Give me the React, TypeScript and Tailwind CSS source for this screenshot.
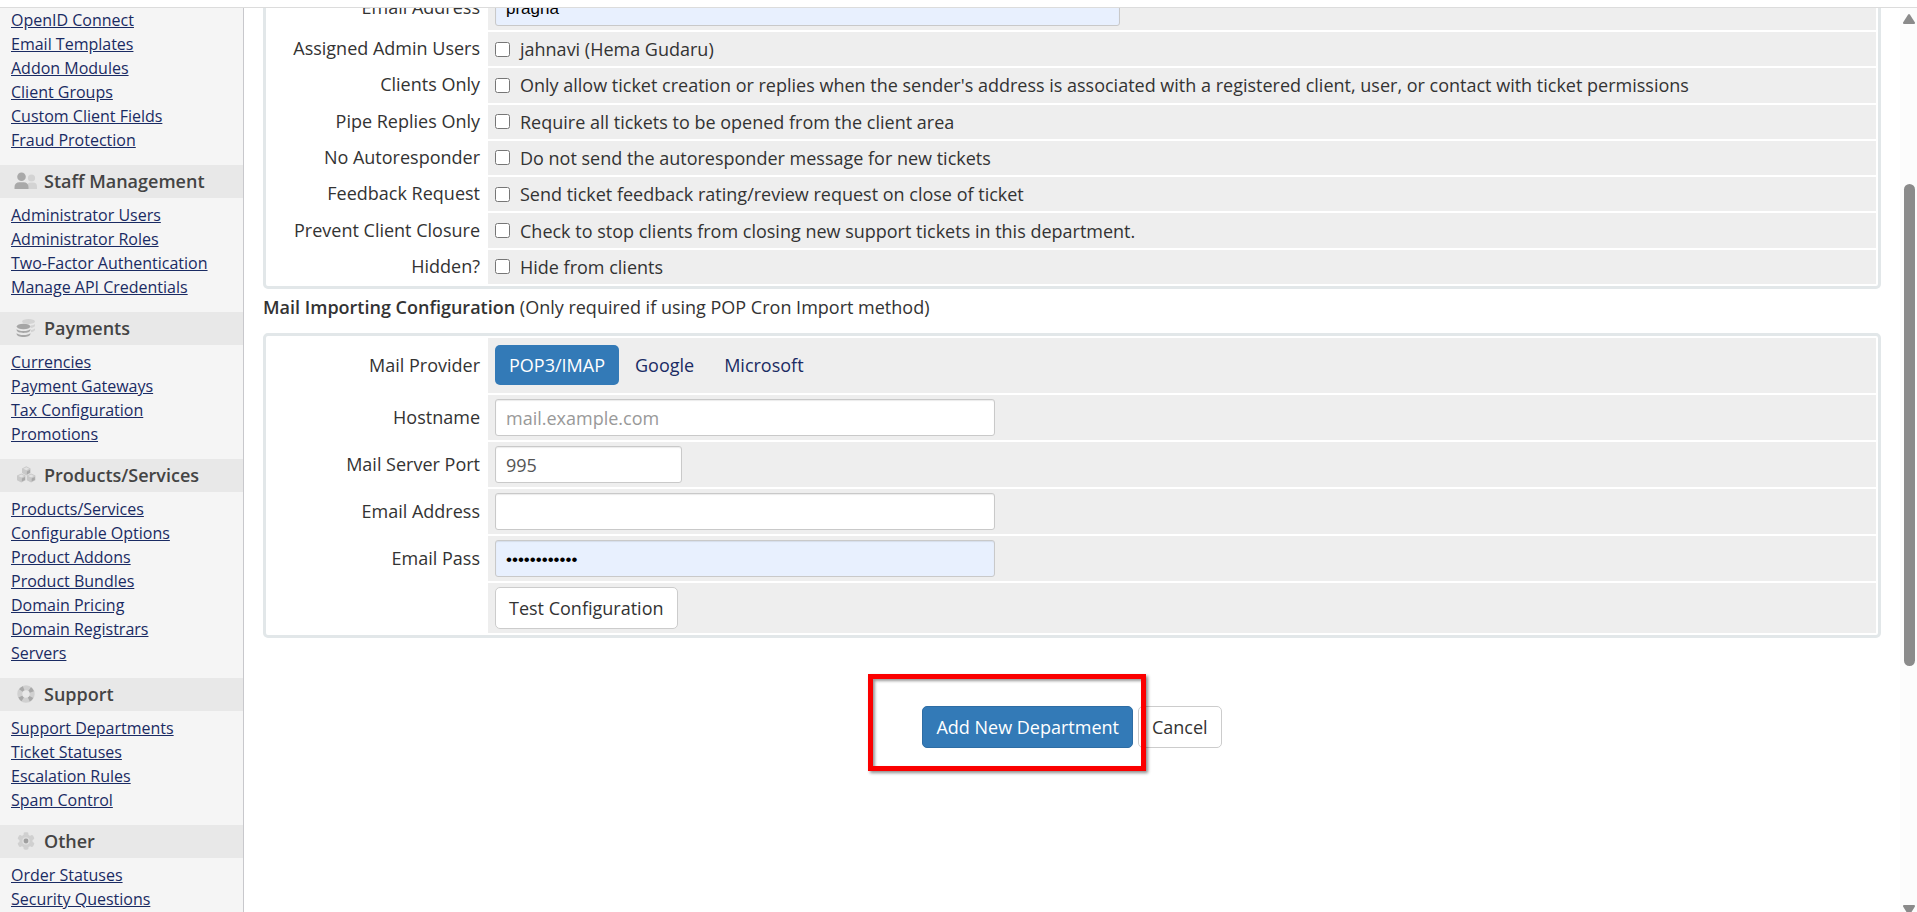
import type { ReactNode } from "react";

type Section = { title?: string; icon?: ReactNode; links: string[] };

const StaffIcon = () => (
  <svg viewBox="0 0 24 18" className="h-[18px] w-6">
    <g fill="#d3d3d3">
      <circle cx="17.500" cy="6" r="3.600" />
      <path d="M13 17v-2.500a4 4 0 0 1 4-4h2a4 4 0 0 1 4 4V17z" />
    </g>
    <g fill="#a9a9a9">
      <circle cx="7.500" cy="4.800" r="4.300" />
      <path d="M.5 17v-2a4.800 4.800 0 0 1 4.800-4.800h4.400A4.800 4.800 0 0 1 14.500 15v2z" />
    </g>
  </svg>
);

const CoinsIcon = () => (
  <svg viewBox="0 0 24 20" className="h-5 w-6">
    <g fill="#d3d3d3">
      <ellipse cx="14.500" cy="3.500" rx="6.500" ry="2.600" />
      <path d="M16.500 7.500c2.500-.2 4-.9 4.500-1.800v1.800c0 1.300-1.700 2.200-4.500 2.500zM17 12c2.200-.3 3.600-1 4-1.700v1.500c0 1.200-1.500 2-4 2.400z" />
    </g>
    <g fill="#a6a6a6">
      <ellipse cx="9.500" cy="8.500" rx="6.800" ry="2.800" />
      <path d="M2.700 11c1 1.400 3.600 2 6.800 2s5.800-.6 6.800-2v1.300c0 1.600-3 2.600-6.800 2.600s-6.800-1-6.800-2.600zM2.700 15c1 1.400 3.600 2 6.800 2s5.800-.6 6.800-2v1.300c0 1.600-3 2.700-6.800 2.700s-6.800-1.100-6.800-2.700z" />
    </g>
  </svg>
);

const Cube = ({ x, y }: { x: number; y: number }) => (
  <g transform={`translate(${x} ${y})`}>
    <path d="M0 2.200 4.300 0l4.300 2.200v4.700L4.300 9.200 0 6.900z" fill="#c9c9c9" />
    <path d="M1.300 2.600 4.300 1l3 1.600-3 1.500z" fill="#e2e2e2" />
    <path d="M4.900 5.200l3.100-1.600v3L4.900 8.200z" fill="#a9a9a9" />
  </g>
);

const CubesIcon = () => (
  <svg viewBox="0 0 24 20" className="h-5 w-6">
    <Cube x={8} y={1.2} />
    <Cube x={3} y={8.4} />
    <Cube x={12.8} y={8.4} />
  </svg>
);

const SupportIcon = () => (
  <svg viewBox="0 0 24 20" className="h-5 w-6" fill="none">
    <circle cx="12" cy="10" r="6.200" stroke="#d0d0d0" strokeWidth="5" />
    <circle
      cx="12"
      cy="10"
      r="6.200"
      stroke="#a9a9a9"
      strokeWidth="4.400"
      strokeDasharray="3.400 6.340"
      strokeDashoffset="-3.170"
    />
  </svg>
);

const GearIcon = () => (
  <svg viewBox="0 0 24 20" className="h-5 w-6">
    <g fill="#d0d0d0">
      <circle cx="12" cy="10" r="6.600" />
      {[0, 60, 120].map((a) => (
        <rect key={a} x="9.600" y="1.300" width="4.800" height="17.400" rx="1.400" transform={`rotate(${a} 12 10)`} />
      ))}
    </g>
    <circle cx="12" cy="10" r="3.800" fill="#dedede" />
    <circle cx="12" cy="10" r="2.400" fill="#9f9f9f" />
  </svg>
);

const sections: Section[] = [
  {
    links: ["OpenID Connect", "Email Templates", "Addon Modules", "Client Groups", "Custom Client Fields", "Fraud Protection"],
  },
  {
    title: "Staff Management",
    icon: <StaffIcon />,
    links: ["Administrator Users", "Administrator Roles", "Two-Factor Authentication", "Manage API Credentials"],
  },
  {
    title: "Payments",
    icon: <CoinsIcon />,
    links: ["Currencies", "Payment Gateways", "Tax Configuration", "Promotions"],
  },
  {
    title: "Products/Services",
    icon: <CubesIcon />,
    links: [
      "Products/Services",
      "Configurable Options",
      "Product Addons",
      "Product Bundles",
      "Domain Pricing",
      "Domain Registrars",
      "Servers",
    ],
  },
  {
    title: "Support",
    icon: <SupportIcon />,
    links: ["Support Departments", "Ticket Statuses", "Escalation Rules", "Spam Control"],
  },
  {
    title: "Other",
    icon: <GearIcon />,
    links: ["Order Statuses", "Security Questions"],
  },
];

const options = [
  { id: "admins", label: "Assigned Admin Users", text: "jahnavi (Hema Gudaru)" },
  {
    id: "clients",
    label: "Clients Only",
    text: "Only allow ticket creation or replies when the sender's address is associated with a registered client, user, or contact with ticket permissions",
  },
  { id: "pipe", label: "Pipe Replies Only", text: "Require all tickets to be opened from the client area" },
  { id: "noauto", label: "No Autoresponder", text: "Do not send the autoresponder message for new tickets" },
  { id: "feedback", label: "Feedback Request", text: "Send ticket feedback rating/review request on close of ticket" },
  {
    id: "closure",
    label: "Prevent Client Closure",
    text: "Check to stop clients from closing new support tickets in this department.",
  },
  { id: "hidden", label: "Hidden?", text: "Hide from clients" },
];

const inputClass =
  "block h-[37px] max-w-full rounded-[3px] border border-[#c9c9c9] px-[10px] shadow-[inset_0_1px_1px_rgba(0,0,0,0.08)] outline-none placeholder:text-[#999]";

function Row({ label, htmlFor, children }: { label?: string; htmlFor?: string; children: ReactNode }) {
  return (
    <div className="flex">
      <div className="flex w-[222px] shrink-0 items-center justify-end pr-2 pb-[2px]">
        {label && <label htmlFor={htmlFor}>{label}</label>}
      </div>
      <div className="flex min-w-0 flex-1 items-center bg-[#eee] px-[7px] py-1">{children}</div>
    </div>
  );
}

function Panel({ children }: { children: ReactNode }) {
  return (
    <div className="flex flex-col gap-[2px] rounded-[5px] border-[3px] border-[#e2e7e9] p-[2px] pl-0">{children}</div>
  );
}

function Sidebar() {
  return (
    <nav className="w-[244px] shrink-0 overflow-hidden border-r border-[#c8c8cc] bg-[#f5f5f5] text-base">
      {sections.map((s, i) => (
        <section key={i}>
          {s.title && (
            <h2 className="flex h-[33px] items-center gap-[6px] bg-[#e8e8e8] pb-[2px] pl-[14px] text-lg font-semibold text-[#444]">
              {s.icon}
              {s.title}
            </h2>
          )}
          <ul className={s.title ? "pt-[5px] pb-[13px] pl-[11px]" : "pb-[13px] pl-[11px]"}>
            {s.links.map((l) => (
              <li key={l} className="leading-6">
                <a href="#" className="text-[#1a2b63] underline">
                  {l}
                </a>
              </li>
            ))}
          </ul>
        </section>
      ))}
    </nav>
  );
}

function ScrollTrack() {
  return (
    <div aria-hidden="true" className="flex w-[17px] shrink-0 flex-col items-center overflow-hidden bg-[#fcfcfc] pt-[6px] pr-[2px] pl-[3px]">
      <svg viewBox="0 0 12 10" className="h-[10px] w-3 shrink-0" fill="#8b8b8b">
        <path d="M5 .8a1.200 1.200 0 0 1 2 0l4.800 7.500c.5.800.1 1.700-.8 1.700H1C.1 10-.3 9.100.2 8.300z" />
      </svg>
      <div className="mt-40 h-[482px] w-[11px] shrink-0 rounded-full bg-[#8b8b8b]" />
      <div className="flex-1" />
      <svg viewBox="0 0 12 7" className="h-[7px] w-3 shrink-0" fill="#8b8b8b">
        <path d="M1 0h10c.9 0 1.300.9.8 1.700L8.500 7h-5L.2 1.700C-.3.900.1 0 1 0z" />
      </svg>
    </div>
  );
}

export default function App() {
  return (
    <div className="flex h-screen flex-col overflow-hidden bg-white font-['Open_Sans','Noto_Sans',sans-serif] text-[#333]">
      <div className="h-2 shrink-0 border-b border-[#dcdcdc]" />
      <div className="flex min-h-0 flex-1">
        <Sidebar />
        <main className="min-w-0 flex-1 overflow-hidden pr-[19px] pl-[19px] text-lg leading-[26px]">
          <form className="-mt-7" onSubmit={(e) => e.preventDefault()}>
            <Panel>
              <Row label="Email Address" htmlFor="dept-email">
                <input
                  id="dept-email"
                  defaultValue="pragna"
                  className={`${inputClass} w-[625px] bg-[#e8f0fe] pt-[2px] font-['Liberation_Sans',sans-serif] text-[17px] text-black`}
                />
              </Row>
              <div className="grid min-h-[252px] auto-rows-fr gap-[2px]">
                {options.map((o) => (
                  <Row key={o.id} label={o.label} htmlFor={o.id}>
                    <input id={o.id} type="checkbox" className="mr-[10px] size-[15px] shrink-0" />
                    <span>{o.text}</span>
                  </Row>
                ))}
              </div>
            </Panel>

            <p className="pt-[5px] pb-[13px]">
              <b className="font-semibold">Mail Importing Configuration</b> (Only required if using POP Cron Import method)
            </p>

            <Panel>
              <Row label="Mail Provider">
                <div className="flex gap-[2px] pt-[3px] pb-1">
                  <button type="button" className="h-10 rounded-[5px] bg-[#337ab7] px-[14px] text-white">
                    POP3/IMAP
                  </button>
                  <button type="button" className="h-10 rounded-[5px] px-[14px] text-[#1a2b63]">
                    Google
                  </button>
                  <button type="button" className="h-10 rounded-[5px] px-[14px] text-[#1a2b63]">
                    Microsoft
                  </button>
                </div>
              </Row>
              <Row label="Hostname" htmlFor="host">
                <input id="host" placeholder="mail.example.com" className={`${inputClass} w-[500px] bg-white text-[#555]`} />
              </Row>
              <Row label="Mail Server Port" htmlFor="port">
                <input id="port" defaultValue="995" className={`${inputClass} w-[187px] bg-white text-[#555]`} />
              </Row>
              <Row label="Email Address" htmlFor="email">
                <input id="email" className={`${inputClass} w-[500px] bg-white text-[#555]`} />
              </Row>
              <Row label="Email Pass" htmlFor="pass">
                <input
                  id="pass"
                  type="password"
                  defaultValue="abcdefghijkl"
                  className={`${inputClass} w-[500px] bg-[#e8f0fe] pt-[2px] font-['Liberation_Sans',sans-serif] text-[17px] text-black`}
                />
              </Row>
              <Row>
                <button type="button" className="h-[42px] rounded-[5px] border border-[#ccc] bg-white px-[13px]">
                  Test Configuration
                </button>
              </Row>
            </Panel>

            <div className="flex justify-center gap-[5px] pt-[68px]">
              <div className="relative">
                <button type="submit" className="h-[42px] rounded-[5px] border border-[#2e6da4] bg-[#337ab7] px-[13px] text-white">
                  Add New Department
                </button>
                <div className="pointer-events-none absolute -top-8 -right-[13px] -bottom-[23px] -left-[54px] z-10 border-5 border-[#fb0000] shadow-[2px_2px_3px_rgba(0,0,0,0.45),inset_2px_2px_3px_rgba(0,0,0,0.4)]" />
              </div>
              <button type="button" className="h-[42px] rounded-[5px] border border-[#ccc] bg-white px-[13px]">
                Cancel
              </button>
            </div>
          </form>
        </main>
        <ScrollTrack />
      </div>
    </div>
  );
}
